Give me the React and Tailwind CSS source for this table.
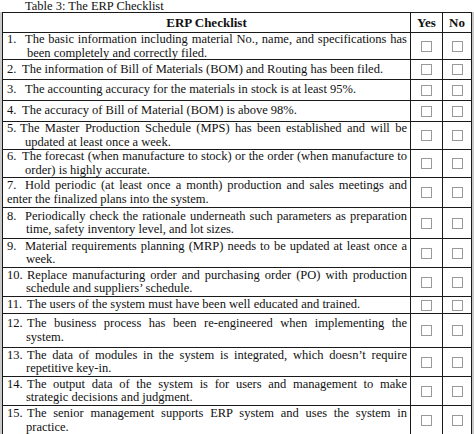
import React from 'react';

const rows = [
  { n: "1.", h: "h-[27px]", numW: "w-[18px]", lines: ["The basic information including material No., name, and specifications has", "been completely and correctly filed."], l2: "pl-[20px]" },
  { n: "2.", h: "h-[20px]", numW: "w-[15px]", lines: ["The information of Bill of Materials (BOM) and Routing has been filed."] },
  { n: "3.", h: "h-[21px]", numW: "w-[18px]", lines: ["The accounting accuracy for the materials in stock is at least 95%."] },
  { n: "4.", h: "h-[21px]", numW: "w-[15px]", lines: ["The accuracy of Bill of Material (BOM) is above 98%."] },
  { n: "5.", h: "h-[28px]", numW: "w-[13px]", lines: ["The Master Production Schedule (MPS) has been established and will be", "updated at least once a week."], l2: "pl-[18px]" },
  { n: "6.", h: "h-[28px]", numW: "w-[15px]", lines: ["The forecast (when manufacture to stock) or the order (when manufacture to", "order) is highly accurate."], l2: "pl-[18px]" },
  { n: "7.", h: "h-[30px]", numW: "w-[18px]", lines: ["Hold periodic (at least once a month) production and sales meetings and", "enter the finalized plans into the system."], l2: "pl-0" },
  { n: "8.", h: "h-[31px]", numW: "w-[18px]", lines: ["Periodically check the rationale underneath such parameters as preparation", "time, safety inventory level, and lot sizes."], l2: "pl-[19px]" },
  { n: "9.", h: "h-[29px]", numW: "w-[18px]", lines: ["Material requirements planning (MRP) needs to be updated at least once a", "week."], l2: "pl-[19px]" },
  { n: "10.", h: "h-[29px]", numW: "w-[20px]", lines: ["Replace manufacturing order and purchasing order (PO) with production", "schedule and suppliers’ schedule."], l2: "pl-[19px]" },
  { n: "11.", h: "h-[17px]", numW: "w-[20px]", lines: ["The users of the system must have been well educated and trained."] },
  { n: "12.", h: "h-[34px]", numW: "w-[20px]", lines: ["The business process has been re-engineered when implementing the", "system."], l2: "pl-[19px]" },
  { n: "13.", h: "h-[29px]", numW: "w-[20px]", lines: ["The data of modules in the system is integrated, which doesn’t require", "repetitive key-in."], l2: "pl-[19px]" },
  { n: "14.", h: "h-[29px]", numW: "w-[20px]", lines: ["The output data of the system is for users and management to make", "strategic decisions and judgment."], l2: "pl-[19px]" },
  { n: "15.", h: "h-[30px]", numW: "w-[20px]", lines: ["The senior management supports ERP system and uses the system in", "practice."], l2: "pl-[19px]" },
];

const Box = () => (
  <span className="block w-[11px] h-[11px] border border-[#999999] bg-white"></span>
);

const App = () => {
  return (
    <div className="w-[474px] h-[434px] overflow-hidden bg-white text-[#111] font-['Liberation_Serif','Times_New_Roman',serif]">
      {/* caption */}
      <div className="h-[12px] pl-[25px] text-[12.5px] leading-[12px]">Table 3: The ERP Checklist</div>

      <div className="px-[2px] bg-[#c9c9c9]">
        <div className="bg-white border-x border-t border-[#1a1a1a]">
          {/* header */}
          <div className="grid grid-cols-[408px_32px_28px] h-[20px] border-b border-[#1a1a1a] font-bold text-[13px] leading-[19px]">
            <div className="border-r border-[#1a1a1a] text-center">ERP Checklist</div>
            <div className="border-r border-[#1a1a1a] text-center">Yes</div>
            <div className="text-center">No</div>
          </div>

          {rows.map((r) => (
            <div key={r.n} className={`grid grid-cols-[408px_32px_28px] border-b border-[#1a1a1a] ${r.h}`}>
              <div className="border-r border-[#1a1a1a] pl-[4px] pr-[3px] flex flex-col justify-center text-[12.5px] leading-[13.5px]">
                <div className="flex">
                  <span className={`shrink-0 ${r.numW}`}>{r.n}</span>
                  <span className={`flex-1 whitespace-nowrap ${r.lines.length > 1 ? "text-justify [text-align-last:justify]" : ""}`}>
                    {r.lines[0]}
                  </span>
                </div>
                {r.lines[1] && (
                  <div className={r.l2}>{r.lines[1]}</div>
                )}
              </div>
              <div className="border-r border-[#1a1a1a] flex items-center justify-center">
                <Box />
              </div>
              <div className="flex items-center justify-center">
                <Box />
              </div>
            </div>
          ))}
        </div>
      </div>
    </div>
  );
};

export default App;
